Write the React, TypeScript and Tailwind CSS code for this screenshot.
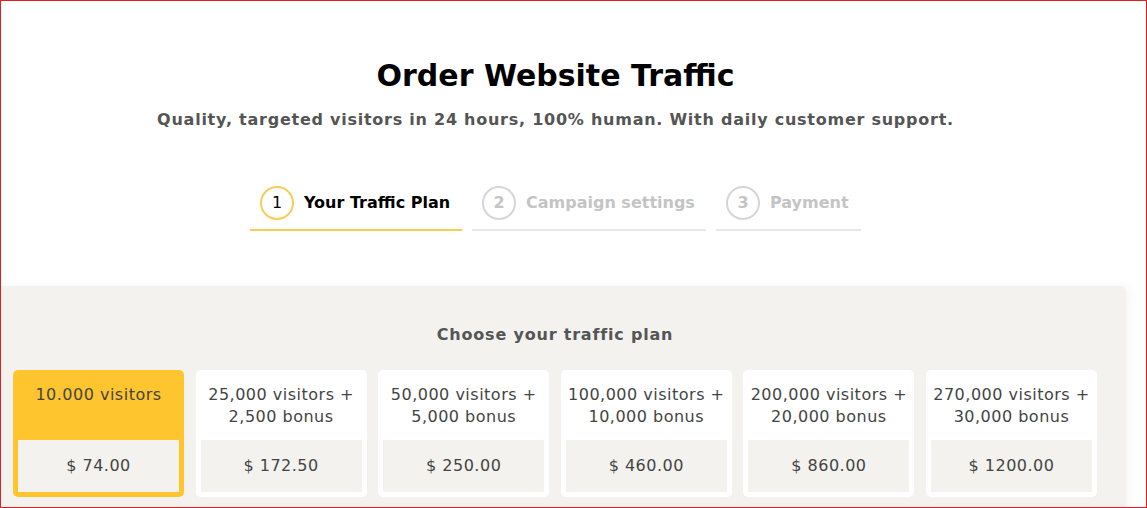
import React from 'react';

const plans = [
  { label: ['10.000 visitors'], price: '$ 74.00', active: true },
  { label: ['25,000 visitors +', '2,500 bonus'], price: '$ 172.50' },
  { label: ['50,000 visitors +', '5,000 bonus'], price: '$ 250.00' },
  { label: ['100,000 visitors +', '10,000 bonus'], price: '$ 460.00' },
  { label: ['200,000 visitors +', '20,000 bonus'], price: '$ 860.00' },
  { label: ['270,000 visitors +', '30,000 bonus'], price: '$ 1200.00' },
];

const steps = [
  { n: '1', title: 'Your Traffic Plan', active: true, w: 'w-[212px]' },
  { n: '2', title: 'Campaign settings', w: 'w-[234px]' },
  { n: '3', title: 'Payment', w: 'w-[145px]' },
];

export default function App() {
  return (
    <div className="h-[508px] w-full overflow-hidden border border-[#e02020] bg-white font-['DejaVu_Sans',sans-serif]">
      <div className="flex w-[1109px] flex-col items-center">
        <h1 className="mt-[57px] text-[30px] leading-[36px] font-bold text-black">
          Order Website Traffic
        </h1>
        <p className="mt-[15px] text-[16px] leading-[22px] font-bold tracking-[0.75px] text-[#555]">
          Quality, targeted visitors in 24 hours, 100% human. With daily customer support.
        </p>

        {/* steps */}
        <div className="mt-[50px] flex gap-[10px]">
          {steps.map((s) => (
            <div
              key={s.n}
              className={`flex h-[50px] ${s.w} items-center gap-[10px] border-b-2 px-[10px] pb-[5px] ${
                s.active ? 'border-[#f7cd55]' : 'border-[#e8e8e8]'
              }`}
            >
              <div
                className={`flex h-[34px] w-[34px] shrink-0 items-center justify-center rounded-full border-2 text-[16px] ${
                  s.active ? 'border-[#f7cd55] text-black' : 'border-[#d6d6d6] font-bold text-[#c4c4c4]'
                }`}
              >
                {s.n}
              </div>
              <span
                className={`text-[16px] font-bold whitespace-nowrap ${
                  s.active ? 'text-black' : 'text-[#c4c4c4]'
                }`}
              >
                {s.title}
              </span>
            </div>
          ))}
        </div>
      </div>

      {/* plan panel */}
      <div className="mt-[55px] h-[230px] w-[1125px] rounded-tr-md bg-[#f3f2ef] pt-[36px] pl-[12px] shadow-[4px_0_10px_rgba(0,0,0,0.04)]">
        <h2 className="w-[1084px] text-center text-[16px] leading-[26px] font-bold tracking-[0.8px] text-[#555]">
          Choose your traffic plan
        </h2>
        <div className="mt-[22px] flex w-[1084px] gap-[11.6px]">
          {plans.map((p, i) => (
            <div
              key={i}
              className={`flex h-[127px] w-[171px] flex-col rounded-[5px] p-[5px] ${
                p.active ? 'bg-[#fec52e]' : 'bg-white'
              }`}
            >
              <div className="flex h-[65px] flex-col items-center pt-[9px] text-[16px] leading-[22px] tracking-[0.5px] text-[#444]">
                {p.label.map((l) => (
                  <span key={l} className="whitespace-nowrap">
                    {l}
                  </span>
                ))}
              </div>
              <div className="flex h-[52px] items-center justify-center bg-[#f3f2ef] text-[16px] tracking-[0.5px] text-[#444]">
                {p.price}
              </div>
            </div>
          ))}
        </div>
      </div>
    </div>
  );
}
